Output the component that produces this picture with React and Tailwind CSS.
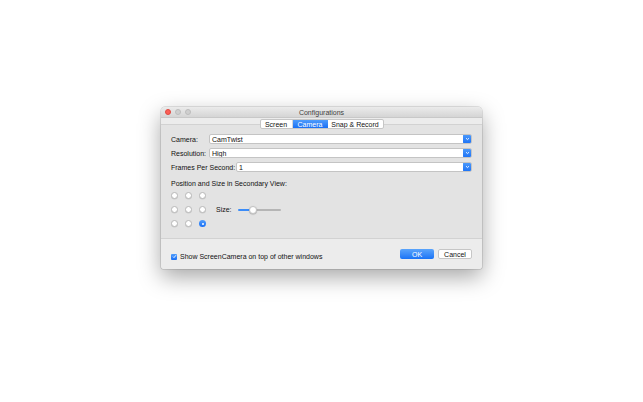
import React from 'react';

const font = { fontFamily: '"Liberation Sans", Arial, sans-serif' };

const Chevron = () => (
    <svg width="5" height="4" viewBox="0 0 5 4">
        <path d="M1 1.2 L2.5 2.6 L4 1.2" fill="none" stroke="white" strokeWidth="0.9" />
    </svg>
);

const Combo = ({ value }) => (
    <div className="flex-1 flex h-[10px] rounded-[2px] bg-white border border-[#c4c4c4] overflow-hidden">
        <div className="flex-1 flex items-center pl-[2px] text-[7px] leading-none text-[#111]">{value}</div>
        <div className="w-[9px] -my-[1px] -mr-[1px] flex items-center justify-center rounded-[2px] bg-gradient-to-b from-[#4f9cfb] to-[#176ff5]">
            <Chevron />
        </div>
    </div>
);

const Row = ({ label, value, labelWidth }) => (
    <div className="flex items-center">
        <div className={`${labelWidth} text-[7px] leading-none text-[#111]`}>{label}</div>
        <Combo value={value} />
    </div>
);

const Radio = ({ on }) =>
    on ? (
        <div className="w-[7px] h-[7px] rounded-full bg-gradient-to-b from-[#4f9cfb] to-[#176ff5] flex items-center justify-center">
            <div className="w-[2px] h-[2px] rounded-full bg-white" />
        </div>
    ) : (
        <div className="w-[7px] h-[7px] rounded-full bg-white border border-[#b9b9b9] shadow-[0_0.5px_0.5px_rgba(0,0,0,0.1)]" />
    );

export default function App() {
    const grid = [false, false, false, false, false, false, false, false, true];

    return (
        <div className="w-[643px] h-[402px] bg-white flex justify-center pt-[107px]" style={font}>
            <div className="w-[321px] h-[162px] flex flex-col rounded-t-[4px] rounded-b-[2px] bg-[#ececec] shadow-[0_8px_22px_rgba(0,0,0,0.35),0_0_0_0.5px_rgba(0,0,0,0.2)] overflow-hidden">
                {/* title bar */}
                <div className="h-[11px] flex items-center px-[4px] bg-gradient-to-b from-[#ebebeb] to-[#d5d5d5] border-b border-[#c8c8c8]">
                    <div className="flex gap-[4px]">
                        <div className="w-[6px] h-[6px] rounded-full bg-[#fc5f57] border-[0.5px] border-[#de4a41]" />
                        <div className="w-[6px] h-[6px] rounded-full bg-[#cfcfcf] border-[0.5px] border-[#bcbcbc]" />
                        <div className="w-[6px] h-[6px] rounded-full bg-[#cfcfcf] border-[0.5px] border-[#bcbcbc]" />
                    </div>
                    <div className="flex-1 text-center text-[7px] leading-none text-[#3f3f3f] -ml-[26px]">Configurations</div>
                </div>

                {/* tab box */}
                <div className="mt-[6px] h-[115px] bg-[#e3e3e3] border-t border-b border-[#d2d2d2] flex flex-col px-[10px]">
                    <div className="-mt-[6px] flex justify-center">
                        <div className="flex h-[10px] rounded-[2px] bg-white border border-[#c6c6c6] text-[7px] leading-none overflow-hidden">
                            <div className="w-[32px] flex items-center justify-center text-[#111] border-r border-[#d6d6d6]">Screen</div>
                            <div className="w-[35px] flex items-center justify-center text-white bg-gradient-to-b from-[#4f9cfb] to-[#176ff5]">Camera</div>
                            <div className="w-[55px] flex items-center justify-center text-[#111]">Snap &amp; Record</div>
                        </div>
                    </div>

                    <div className="mt-[5px] flex flex-col gap-[4px]">
                        <Row label="Camera:" value="CamTwist" labelWidth="w-[38px]" />
                        <Row label="Resolution:" value="High" labelWidth="w-[38px]" />
                        <Row label="Frames Per Second:" value="1" labelWidth="w-[65px]" />
                    </div>

                    <div className="mt-[8px] text-[7px] leading-none text-[#111]">Position and Size in Secondary View:</div>

                    <div className="mt-[5px] flex items-center">
                        <div className="grid grid-cols-3 gap-x-[7px] gap-y-[7px]">
                            {grid.map((on, i) => (
                                <Radio key={i} on={on} />
                            ))}
                        </div>
                        <div className="ml-[10px] text-[7px] leading-none text-[#111]">Size:</div>
                        <div className="ml-[6px] w-[43px] h-[8px] flex items-center relative">
                            <div className="w-[15px] h-[2px] rounded-l-full bg-[#3b8cf8]" />
                            <div className="flex-1 h-[2px] rounded-r-full bg-[#b5b5b5]" />
                            <div className="absolute left-[11px] top-0 w-[8px] h-[8px] rounded-full bg-white border border-[#c2c2c2] shadow-[0_0.5px_1px_rgba(0,0,0,0.25)]" />
                        </div>
                    </div>
                </div>

                {/* bottom */}
                <div className="flex-1 flex items-start px-[10px] pt-[10px]">
                    <div className="mt-[4px] flex items-center gap-[3px]">
                        <div className="w-[6px] h-[6px] rounded-[1px] bg-gradient-to-b from-[#4f9cfb] to-[#176ff5] flex items-center justify-center">
                            <svg width="5" height="5" viewBox="0 0 5 5">
                                <path d="M1 2.6 L2 3.6 L4 1.2" fill="none" stroke="white" strokeWidth="0.9" />
                            </svg>
                        </div>
                        <div className="text-[7px] leading-none text-[#111]">Show ScreenCamera on top of other windows</div>
                    </div>
                    <div className="flex-1" />
                    <div className="flex gap-[4px]">
                        <div className="w-[34px] h-[10px] rounded-[2px] flex items-center justify-center text-[7px] leading-none text-white bg-gradient-to-b from-[#5aa4fb] to-[#1873f6]">OK</div>
                        <div className="w-[34px] h-[10px] rounded-[2px] flex items-center justify-center text-[7px] leading-none text-[#111] bg-white border border-[#c6c6c6]">Cancel</div>
                    </div>
                </div>
            </div>
        </div>
    );
}
